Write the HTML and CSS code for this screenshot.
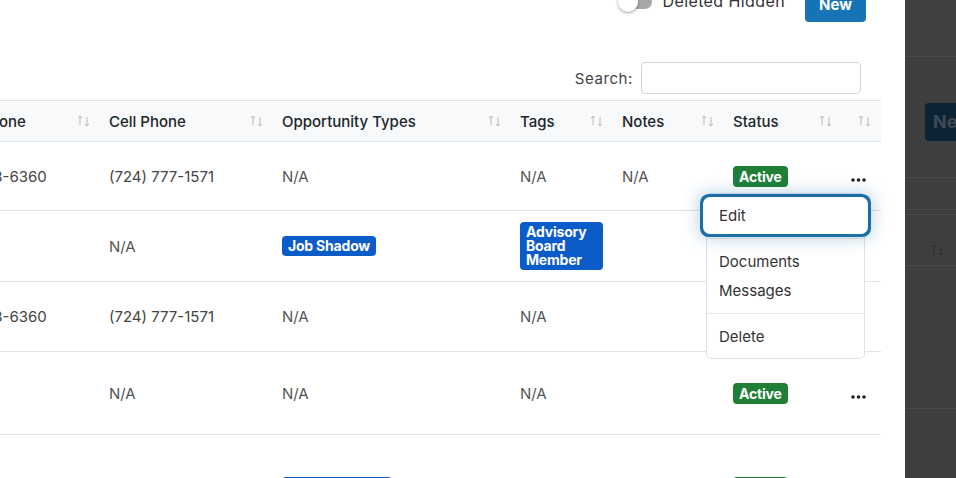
FILE: index.html
```html
<!DOCTYPE html>
<html lang="en">
<head>
    <meta charset="UTF-8">
    <meta name="viewport" content="width=device-width, initial-scale=1.0">
    <title>Contacts</title>
    <link rel="stylesheet" href="styles.css">
</head>

<body>
    <div class="layout">
        <main class="content">
            <div class="toolbar">
                <span class="switch"><span class="switch-knob"></span></span>
                <span class="switch-label">Deleted Hidden</span>
                <button class="btn-new">New</button>
            </div>

            <div class="search-bar">
                <label for="search">Search:</label>
                <input id="search" type="text">
            </div>

            <div class="table-wrap">
                <table class="data-table">
                    <colgroup>
                        <col class="col-home">
                        <col class="col-cell">
                        <col class="col-types">
                        <col class="col-tags">
                        <col class="col-notes">
                        <col class="col-status">
                        <col class="col-actions">
                    </colgroup>
                    <thead>
                        <tr>
                            <th><div class="th-inner">Home Phone <svg class="sort" width="13" height="14" viewBox="0 0 13 14"><path d="M3 11V2M1 4l2-2 2 2M10 3v9M8 10l2 2 2-2"/></svg></div></th>
                            <th><div class="th-inner">Cell Phone <svg class="sort" width="13" height="14" viewBox="0 0 13 14"><path d="M3 11V2M1 4l2-2 2 2M10 3v9M8 10l2 2 2-2"/></svg></div></th>
                            <th><div class="th-inner">Opportunity Types <svg class="sort" width="13" height="14" viewBox="0 0 13 14"><path d="M3 11V2M1 4l2-2 2 2M10 3v9M8 10l2 2 2-2"/></svg></div></th>
                            <th><div class="th-inner">Tags <svg class="sort" width="13" height="14" viewBox="0 0 13 14"><path d="M3 11V2M1 4l2-2 2 2M10 3v9M8 10l2 2 2-2"/></svg></div></th>
                            <th><div class="th-inner">Notes <svg class="sort" width="13" height="14" viewBox="0 0 13 14"><path d="M3 11V2M1 4l2-2 2 2M10 3v9M8 10l2 2 2-2"/></svg></div></th>
                            <th><div class="th-inner">Status <svg class="sort" width="13" height="14" viewBox="0 0 13 14"><path d="M3 11V2M1 4l2-2 2 2M10 3v9M8 10l2 2 2-2"/></svg></div></th>
                            <th class="th-actions"><div class="th-inner"><span></span><svg class="sort" width="13" height="14" viewBox="0 0 13 14"><path d="M3 11V2M1 4l2-2 2 2M10 3v9M8 10l2 2 2-2"/></svg></div></th>
                        </tr>
                    </thead>
                    <tbody>
                        <tr class="row-first">
                            <td class="phone">(724) 778-6360</td>
                            <td class="phone">(724) 777-1571</td>
                            <td>N/A</td>
                            <td>N/A</td>
                            <td>N/A</td>
                            <td><span class="badge badge-success">Active</span></td>
                            <td><svg class="dots" width="15" height="4" viewBox="0 0 15 4"><circle cx="2" cy="2" r="1.8"/><circle cx="7.5" cy="2" r="1.8"/><circle cx="13" cy="2" r="1.8"/></svg></td>
                        </tr>
                        <tr class="row-tags">
                            <td></td>
                            <td>N/A</td>
                            <td><span class="badge badge-tag">Job Shadow</span></td>
                            <td><span class="badge badge-tag">Advisory Board Member</span></td>
                            <td></td>
                            <td></td>
                            <td></td>
                        </tr>
                        <tr>
                            <td class="phone">(724) 778-6360</td>
                            <td class="phone">(724) 777-1571</td>
                            <td>N/A</td>
                            <td>N/A</td>
                            <td></td>
                            <td></td>
                            <td></td>
                        </tr>
                        <tr class="row-wide">
                            <td></td>
                            <td>N/A</td>
                            <td>N/A</td>
                            <td>N/A</td>
                            <td></td>
                            <td><span class="badge badge-success">Active</span></td>
                            <td><svg class="dots" width="15" height="4" viewBox="0 0 15 4"><circle cx="2" cy="2" r="1.8"/><circle cx="7.5" cy="2" r="1.8"/><circle cx="13" cy="2" r="1.8"/></svg></td>
                        </tr>
                        <tr class="row-tall">
                            <td></td>
                            <td></td>
                            <td><span class="badge badge-tag">Guest Speaker</span></td>
                            <td></td>
                            <td></td>
                            <td><span class="badge badge-success">Active</span></td>
                            <td></td>
                        </tr>
                    </tbody>
                </table>
            </div>

            <!-- row actions menu, open on the first row -->
            <ul class="row-menu">
                <li class="menu-item is-focused">Edit</li>
                <li class="menu-divider"></li>
                <li class="menu-item">Documents</li>
                <li class="menu-item">Messages</li>
                <li class="menu-divider"></li>
                <li class="menu-item">Delete</li>
            </ul>
        </main>

        <aside class="side-panel">
            <div class="panel-head"></div>
            <div class="panel-actions"><span class="panel-btn">New</span></div>
            <div class="panel-gap"></div>
            <div class="panel-thead"><svg width="13" height="14" viewBox="0 0 13 14"><path d="M3 11V2M1 4l2-2 2 2M10 3v9M8 10l2 2 2-2"/></svg></div>
            <div class="panel-row"></div>
        </aside>
    </div>
</body>
</html>
```

FILE: styles.css
```css
body {
    font-family: Inter, "Open Sans", Arial, sans-serif;
    color: #333;
    background-color: #fff;
    margin: 0;
    padding: 0;
    overflow: hidden;
}

.layout {
    display: flex;
    height: 100vh;
}

.content {
    width: 905px;
    flex: none;
    background: #fff;
    position: relative;
    overflow: hidden;
}

/* top toolbar */
.toolbar {
    display: flex;
    justify-content: flex-end;
    align-items: center;
    height: 36px;
    margin-top: -14px;
    padding-right: 39px;
}

.switch {
    position: relative;
    width: 32px;
    height: 14px;
    border-radius: 7px;
    background: #a9a9a9;
    margin-right: 10px;
    margin-bottom: 4px;
}

.switch-knob {
    position: absolute;
    left: -2px;
    top: -3px;
    width: 20px;
    height: 20px;
    border-radius: 50%;
    background: #fff;
    box-shadow: 0 1px 3px rgba(0, 0, 0, 0.4);
}

.switch-label {
    font-size: 16px;
    color: #333;
    letter-spacing: 0.4px;
    margin-right: 20px;
    margin-bottom: 6px;
}

.btn-new {
    width: 61px;
    height: 36px;
    border: none;
    border-radius: 4px;
    background-color: #1674b6;
    color: #fff;
    font-family: inherit;
    font-size: 15px;
    font-weight: 700;
    padding: 0;
}

/* search */
.search-bar {
    display: flex;
    justify-content: flex-end;
    align-items: center;
    gap: 8px;
    margin-top: 40px;
    padding-right: 44px;
    font-size: 15px;
    letter-spacing: 0.6px;
    color: #444;
}

.search-bar input {
    width: 220px;
    height: 32px;
    box-sizing: border-box;
    border: 1px solid #ced4da;
    border-radius: 4px;
}

/* table */
.table-wrap {
    width: 881px;
    margin-top: 6px;
    overflow: hidden;
}

.data-table {
    margin-left: -79px;
    width: 960px;
    border-collapse: collapse;
    table-layout: fixed;
    font-size: 15px;
}

.col-home { width: 175px; }
.col-cell { width: 173px; }
.col-types { width: 238px; }
.col-tags { width: 102px; }
.col-notes { width: 111px; }
.col-status { width: 118px; }
.col-actions { width: 43px; }

.data-table th {
    height: 40px;
    padding: 0 6px 0 13px;
    background: #f7f9fb;
    border-top: 1px solid #dce3ea;
    border-bottom: 1px solid #dce3ea;
    text-align: left;
    font-weight: 500;
    color: #212529;
    white-space: nowrap;
}

.data-table th.th-actions {
    padding-right: 10px;
}

.th-inner {
    display: flex;
    justify-content: space-between;
    align-items: center;
}

.sort path,
.panel-thead path {
    fill: none;
    stroke: #b9b9b9;
    stroke-width: 1;
}

.data-table td {
    height: 69px;
    padding: 0 6px 0 13px;
    border-bottom: 1px solid #dce3ea;
    vertical-align: middle;
    color: #555;
    white-space: nowrap;
}

.data-table td.phone {
    color: #444;
}

.data-table tr.row-first td { height: 68px; }
.data-table tr.row-tags td { height: 70px; }
.data-table tr.row-wide td { height: 82px; }
.data-table tr.row-tall td {
    height: 104px;
    vertical-align: top;
    padding-top: 42px;
}

.badge {
    display: inline-block;
    color: #fff;
    font-weight: 700;
    border-radius: 4px;
    white-space: normal;
    letter-spacing: -0.2px;
    vertical-align: middle;
}

.row-tall .badge {
    vertical-align: top;
}

.badge-success {
    background: #1f7f37;
    font-size: 14px;
    line-height: 17px;
    padding: 2px 6px;
}

.badge-tag {
    background: #0b5bc8;
    font-size: 14px;
    line-height: 14px;
    padding: 3px 6px;
}

.dots circle {
    fill: #222;
}

/* row actions menu */
.row-menu {
    position: absolute;
    left: 706px;
    top: 193px;
    width: 159px;
    box-sizing: border-box;
    margin: 0;
    padding: 7px 0;
    list-style: none;
    background: #fff;
    border: 1px solid #dee2e6;
    border-radius: 5px;
    font-size: 15px;
    color: #333;
}

.menu-item {
    height: 29px;
    line-height: 29px;
    padding: 0 12px;
}

.menu-item.is-focused {
    position: relative;
    background: #fff;
    border-radius: 3px;
    box-shadow: 0 0 0 4px #fff, 0 0 0 7px #1b6ea8, 0 0 16px 9px rgba(27, 110, 168, 0.28);
}

.menu-divider {
    border-top: 1px solid #e3e7eb;
    margin: 8px 0;
}

/* dimmed page on the right */
.side-panel {
    flex: 1;
    background: #3e3e3e;
}

.panel-head {
    height: 56px;
    background: #414141;
    border-bottom: 1px solid #4a4a4a;
}

.panel-actions {
    padding: 46px 0 36px 20px;
    border-bottom: 1px solid #4a4a4a;
}

.panel-btn {
    display: block;
    height: 38px;
    line-height: 38px;
    padding-left: 8px;
    border-radius: 4px 0 0 4px;
    background: #0c2235;
    color: #3e4b56;
    font-size: 18px;
    font-weight: 700;
    white-space: nowrap;
    overflow: hidden;
}

.panel-gap {
    height: 31px;
    border-bottom: 1px solid #4a4a4a;
}

.panel-thead {
    height: 52px;
    margin-top: 4px;
    border-top: 1px solid #4a4a4a;
    border-bottom: 1px solid #4a4a4a;
    padding-left: 26px;
    box-sizing: border-box;
    padding-top: 26px;
}

.panel-thead path {
    stroke: #2c2c2c;
}

.panel-row {
    height: 142px;
    border-bottom: 1px solid #4a4a4a;
}
```
